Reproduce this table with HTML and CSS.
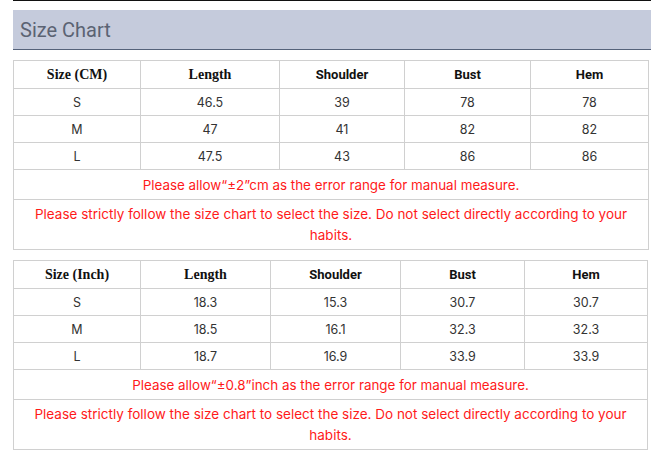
FILE: index.html
```html
<!DOCTYPE html>
<html>
<head>
<meta charset="utf-8">
<link rel="stylesheet" href="styles.css">
</head>
<body>
<div class="page">
  <div class="title-bar"><h2 class="title">Size Chart</h2></div>
  <table class="chart chart-cm">
    <colgroup>
      <col class="c1"><col class="c2"><col class="c3"><col class="c4"><col class="c5">
    </colgroup>
    <tr class="head">
      <th class="serif">Size (CM)</th><th class="serif">Length</th><th>Shoulder</th><th>Bust</th><th>Hem</th>
    </tr>
    <tr class="row"><td>S</td><td>46.5</td><td>39</td><td>78</td><td>78</td></tr>
    <tr class="row"><td>M</td><td>47</td><td>41</td><td>82</td><td>82</td></tr>
    <tr class="row"><td>L</td><td>47.5</td><td>43</td><td>86</td><td>86</td></tr>
    <tr class="note"><td colspan="5">Please allow“±2”cm as the error range for manual measure.</td></tr>
    <tr class="note2"><td colspan="5">Please strictly follow the size chart to select the size. Do not select directly according to your habits.</td></tr>
  </table>
  <table class="chart chart-in">
    <colgroup>
      <col class="d1"><col class="d2"><col class="d3"><col class="d4"><col class="d5">
    </colgroup>
    <tr class="head">
      <th class="serif">Size (Inch)</th><th class="serif">Length</th><th>Shoulder</th><th>Bust</th><th>Hem</th>
    </tr>
    <tr class="row"><td>S</td><td>18.3</td><td>15.3</td><td>30.7</td><td>30.7</td></tr>
    <tr class="row"><td>M</td><td>18.5</td><td>16.1</td><td>32.3</td><td>32.3</td></tr>
    <tr class="row"><td>L</td><td>18.7</td><td>16.9</td><td>33.9</td><td>33.9</td></tr>
    <tr class="note"><td colspan="5">Please allow“±0.8”inch as the error range for manual measure.</td></tr>
    <tr class="note2"><td colspan="5">Please strictly follow the size chart to select the size. Do not select directly according to your habits.</td></tr>
  </table>
</div>
</body>
</html>
```

FILE: styles.css
```css
html, body {
  margin: 0;
  padding: 0;
  background: #fff;
}

.page {
  margin-left: 13px;
  width: 638px;
  border-top: 1px solid #111;
  padding-top: 9px;
}

.title-bar {
  background: #c5cbdc;
  border-bottom: 1px solid #55627a;
  height: 39px;
  display: flex;
  align-items: center;
  padding-left: 7px;
}

.title {
  margin: 0;
  font-family: Roboto, "Liberation Sans", sans-serif;
  font-weight: 400;
  font-size: 20px;
  color: #5b6373;
}

.chart {
  border-collapse: collapse;
  table-layout: fixed;
  margin-top: 10px;
  font-family: Inter, "Liberation Sans", sans-serif;
  color: #333;
}

.chart-cm { width: 635px; }
.chart-in { width: 634px; }

.c1 { width: 127px; }
.c2 { width: 139px; }
.c3 { width: 125px; }
.c4 { width: 126px; }
.c5 { width: 118px; }

.d1 { width: 127px; }
.d2 { width: 130px; }
.d3 { width: 130px; }
.d4 { width: 124px; }
.d5 { width: 123px; }

.chart th,
.chart td {
  border: 1px solid #d0d0d0;
  text-align: center;
  padding: 0;
}

.chart th {
  font-family: Roboto, "Liberation Sans", sans-serif;
  font-weight: 700;
  font-size: 13px;
  color: #111;
  height: 27px;
}

.chart th.serif {
  font-family: "Liberation Serif", serif;
  font-size: 14px;
}

.chart .row td {
  font-size: 12.5px;
  height: 26px;
}

.chart .note td {
  color: #ff1a1a;
  font-size: 13.4px;
  height: 29px;
}

.chart .note2 td {
  color: #ff1a1a;
  font-size: 13.5px;
  line-height: 21px;
  height: 48px;
  padding: 1px 8px 0;
}
```
